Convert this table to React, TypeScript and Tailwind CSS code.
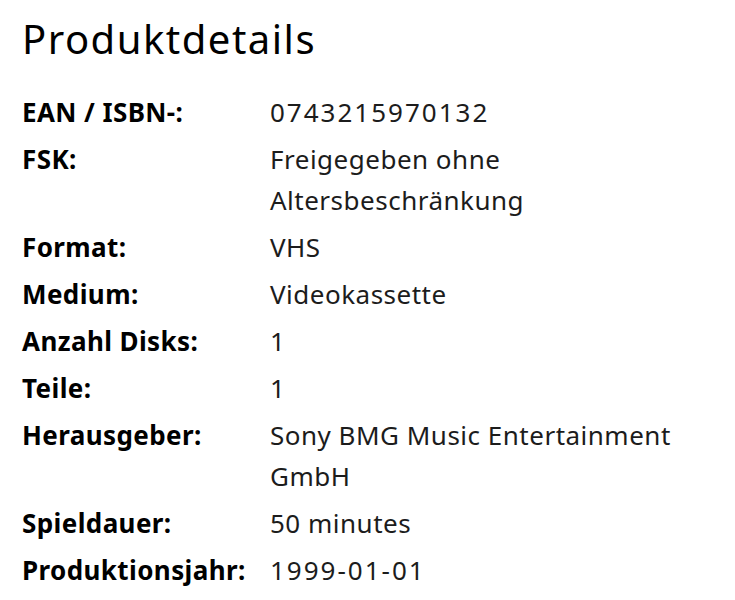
const rows: [string, string, boolean?][] = [
  ["EAN / ISBN-:", "0743215970132", true],
  ["FSK:", "Freigegeben ohne Altersbeschränkung"],
  ["Format:", "VHS"],
  ["Medium:", "Videokassette"],
  ["Anzahl Disks:", "1"],
  ["Teile:", "1"],
  ["Herausgeber:", "Sony BMG Music Entertainment GmbH"],
  ["Spieldauer:", "50 minutes"],
  ["Produktionsjahr:", "1999-01-01", true],
];

export default function App() {
  return (
    <div className="min-h-[600px] w-[735px] bg-white pl-[22px] pr-[50px] pt-[10px] font-['Noto_Sans',sans-serif] text-[#111]">
      <h1 className="text-[40px] leading-[58px] tracking-[1.5px] text-black">Produktdetails</h1>
      <div className="mt-[24px] grid grid-cols-[248px_1fr] gap-y-[6px]">
        {rows.map(([label, value, num]) => (
          <div key={label} className="contents">
            <div className="text-[26px] font-bold leading-[41px] tracking-[0.4px] text-black">{label}</div>
            <div
              className={
                num
                  ? "text-[26px] leading-[41px] tracking-[2px] text-[#1c1c1c]"
                  : "text-[26px] leading-[41px] tracking-[0.5px] text-[#1c1c1c]"
              }
            >
              {value}
            </div>
          </div>
        ))}
      </div>
    </div>
  );
}
